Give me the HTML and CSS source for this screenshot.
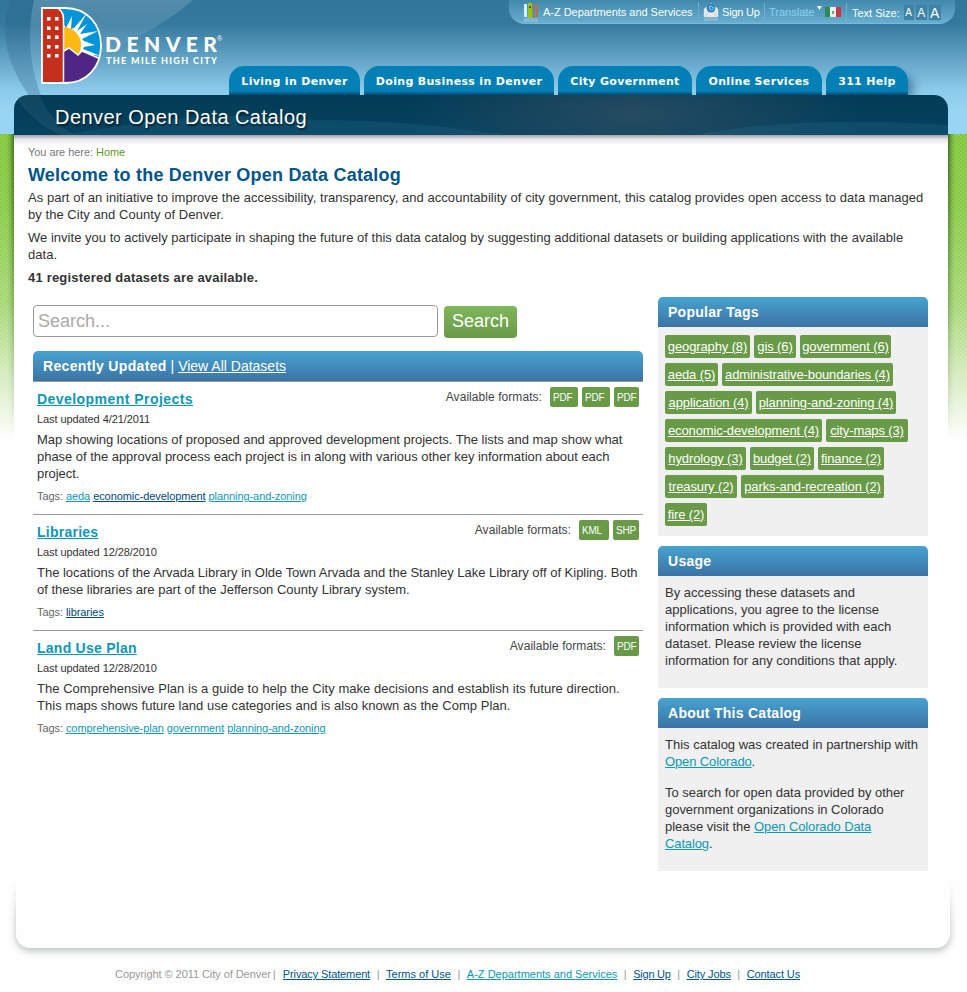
FILE: index.html
```html
<!DOCTYPE html>
<html lang="en">
<head>
<meta charset="utf-8">
<title>Denver Open Data Catalog</title>
<link rel="stylesheet" href="styles.css">
</head>
<body>
<svg class="backdrop" width="967" height="134" viewBox="0 0 967 134" aria-hidden="true">
  <defs>
    <linearGradient id="sweep" x1="0" y1="0" x2="0" y2="1"><stop offset="0" stop-color="#fff" stop-opacity=".16"/><stop offset="1" stop-color="#fff" stop-opacity="0"/></linearGradient>
    <linearGradient id="ring" x1="0" y1="0" x2="0" y2="1"><stop offset="0" stop-color="#0d3e63" stop-opacity=".1"/><stop offset="1" stop-color="#0d3e63" stop-opacity=".28"/></linearGradient>
  </defs>
  <path d="M34 0H193C165 24 128 48 34 75C28 42 30 20 34 0Z" fill="url(#sweep)"/>
  <path d="M10 0H34C25 38 30 78 52 120C25 98-8 48 10 0Z" fill="url(#ring)"/>
</svg>
<div class="page">
  <header class="masthead">
    <svg class="logo" width="184" height="80" viewBox="0 0 184 80" role="img" aria-label="Denver, The Mile High City">
      <defs><clipPath id="dee"><path d="M1 1H24C46 1 60 17 60 38.500S46 76 24 76H1Z"/></clipPath></defs>
      <g clip-path="url(#dee)">
        <path fill="#0095da" d="M20 0h42v54H20z"/>
        <path fill="#fff" d="M22 16L25 21L31 9L30 22L33 21L46 6L36 24L46 17L39 27L57 24L41 32L43 34L54 38L43 40L42 42L60 49L40 46L22 44Z"/>
        <circle cx="22" cy="38" r="18" fill="#fdb913"/>
        <path fill="#4f2683" stroke="#fff" stroke-width="1.500" d="M21 45L28 41L37 48L41 44L62 53V80H21Z"/>
        <path fill="#c4301c" stroke="#fff" stroke-width="1.500" d="M0 0H14Q22.500 3 22.500 12V80H0Z"/>
        <path fill="#fff" d="M6 10h3.500v3.500H6zM14 10h3.500v3.500H14zM6 19.500h3.500V23H6zM14 19.500h3.500V23H14zM6 28.500h3.500V32H6zM14 28.500h3.500V32H14zM6 38h3.500v3.500H6zM14 38h3.500v3.500H14zM6 47h3.500v3.500H6zM14 47h3.500v3.500H14z"/>
      </g>
      <path fill="none" stroke="#fff" stroke-width="1.800" d="M1 1H24C46 1 60 17 60 38.500S46 76 24 76H1Z"/>
      <text class="logo-name" x="64" y="45" textLength="112" lengthAdjust="spacing">DENVER</text>
      <text class="logo-reg" x="176" y="34">®</text>
      <text class="logo-sub" x="65" y="57" textLength="111" lengthAdjust="spacing">THE MILE HIGH CITY</text>
    </svg>
    <div class="topright">
      <div class="utility">
        <svg class="ico-books" width="17" height="20" viewBox="0 0 17 20"><path fill="#d7f0f8" d="M1 2h3v13H1z"/><path fill="#9cc20a" d="M5 1h4v15H5z"/><path fill="#a9744f" d="M10 2h2v14h-2zM13 2h2v13h-2z"/><path fill="#4b5b32" d="M6 4h2v2H6z"/><path fill="#fff" opacity=".2" d="M1 16h14v4H1z"/></svg>
        <a class="u-az">A-Z Departments and Services</a>
        <i class="bar"></i>
        <svg class="ico-mail" width="16" height="20" viewBox="0 0 16 20"><path fill="#e9edf0" stroke="#c2c8ce" stroke-width=".6" d="M1 7L8 1L15 7V15H1Z"/><circle cx="8" cy="6" r="4.500" fill="#2d83bd"/><path fill="none" stroke="#9bd3f0" d="M10 7.500Q7 9 6.500 6T9 4.500Q10 7 11.500 6"/><path fill="#e4e6e8" d="M1 7L8 12L15 7V15H1Z"/><path fill="none" stroke="#c2c8ce" stroke-width=".6" d="M1 15L6 10.500M15 15L10 10.500"/><path fill="#fff" opacity=".2" d="M1 16h14v3H1z"/></svg>
        <a class="u-sign">Sign Up</a>
        <i class="bar"></i>
        <a class="u-trans">Translate</a>
        <svg class="ico-flag" width="25" height="14" viewBox="0 0 25 14"><path fill="#fff" d="M0 1h5L2.500 5z"/><path fill="#2b8b56" d="M8 2h5v10H8z"/><path fill="#eee" d="M13 2h6v10h-6z"/><path fill="#c73844" d="M19 2h5v10h-5z"/><path fill="#8b9a77" d="M15 6h2v3h-2z"/></svg>
        <i class="bar"></i>
        <span class="u-size">Text Size:</span>
        <span class="sz s1">A</span><span class="sz s2">A</span><span class="sz s3">A</span>
      </div>
    </div>
    <nav class="tabs">
      <a class="t1">Living in Denver</a><a class="t2">Doing Business in Denver</a><a class="t3">City Government</a><a class="t4">Online Services</a><a class="t5">311 Help</a>
    </nav>
  </header>
  <div class="sheet">
    <div class="titlebar">
      <svg class="waves" width="934" height="40" viewBox="0 0 934 40" aria-hidden="true"><path fill="#fff" opacity=".06" d="M0 0H26Q34 24 60 40H45Q15 24 0 0Z"/><path fill="#3a87ad" opacity=".17" d="M50 40Q200 12 300 25Q400 25 490 40ZM680 40Q790 20 934 30V40Z"/></svg>
      <span>Denver Open Data Catalog</span>
    </div>
    <div class="content">
      <div class="crumbs">You are here: <a>Home</a></div>
      <h1>Welcome to the Denver Open Data Catalog</h1>
      <p class="intro i1">As part of an initiative to improve the accessibility, transparency, and accountability of city government, this catalog provides open access to data managed<br>by the City and County of Denver.</p>
      <p class="intro i2">We invite you to actively participate in shaping the future of this data catalog by suggesting additional datasets or building applications with the available<br>data.</p>
      <p class="intro count">41 registered datasets are available.</p>
      <div class="columns">
        <main>
          <div class="search"><div class="field">Search...</div><div class="go">Search</div></div>
          <div class="panel-head wide"><b>Recently Updated</b>&nbsp;|&nbsp;<a>View All Datasets</a></div>
          <article>
            <div class="top"><h2 class="h-dev">Development Projects</h2><div class="formats"><span>Available formats:</span><b class="pad">PDF</b><b class="pad">PDF</b><b>PDF</b></div></div>
            <div class="updated">Last updated 4/21/2011</div>
            <p class="d1">Map showing locations of proposed and approved development projects. The lists and map show what<br>phase of the approval process each project is in along with various other key information about each<br>project.</p>
            <div class="tagline">Tags: <a>aeda</a> <a class="seen">economic-development</a> <a>planning-and-zoning</a></div>
          </article>
          <article>
            <div class="top"><h2>Libraries</h2><div class="formats"><span>Available formats:</span><b class="kml">KML</b><b class="shp">SHP</b></div></div>
            <div class="updated">Last updated 12/28/2010</div>
            <p class="d2">The locations of the Arvada Library in Olde Town Arvada and the Stanley Lake Library off of Kipling. Both<br>of these libraries are part of the Jefferson County Library system.</p>
            <div class="tagline">Tags: <a class="seen">libraries</a></div>
          </article>
          <article>
            <div class="top"><h2>Land Use Plan</h2><div class="formats"><span>Available formats:</span><b>PDF</b></div></div>
            <div class="updated">Last updated 12/28/2010</div>
            <p class="d3">The Comprehensive Plan is a guide to help the City make decisions and establish its future direction.<br>This maps shows future land use categories and is also known as the Comp Plan.</p>
            <div class="tagline">Tags: <a>comprehensive-plan</a> <a>government</a> <a>planning-and-zoning</a></div>
          </article>
        </main>
        <aside>
          <section>
            <div class="panel-head"><b>Popular Tags</b></div>
            <div class="cloud">
              <div><a class="geo">geography (8)</a><a class="gis">gis (6)</a><a class="gov">government (6)</a></div>
              <div><a class="aeda">aeda (5)</a><a class="adm">administrative-boundaries (4)</a></div>
              <div><a class="app">application (4)</a><a class="zon">planning-and-zoning (4)</a></div>
              <div><a class="eco">economic-development (4)</a><a class="map">city-maps (3)</a></div>
              <div><a class="hyd">hydrology (3)</a><a class="bud">budget (2)</a><a class="fin">finance (2)</a></div>
              <div><a class="tre">treasury (2)</a><a class="rec">parks-and-recreation (2)</a></div>
              <div><a class="fire">fire (2)</a></div>
            </div>
          </section>
          <section>
            <div class="panel-head"><b>Usage</b></div>
            <div class="body"><p>By accessing these datasets and<br>applications, you agree to the license<br>information which is provided with each<br>dataset. Please review the license<br>information for any conditions that apply.</p></div>
          </section>
          <section>
            <div class="panel-head"><b>About This Catalog</b></div>
            <div class="body"><p>This catalog was created in partnership with<br><a>Open Colorado</a>.</p><p class="more">To search for open data provided by other<br>government organizations in Colorado<br>please visit the <a>Open Colorado Data<br>Catalog</a>.</p></div>
          </section>
        </aside>
      </div>
    </div>
  </div>
  <div class="base"></div>
  <footer><span class="copy">Copyright © 2011 City of Denver</span><i class="first">|</i><a>Privacy Statement</a><i>|</i><a class="even">Terms of Use</a><i>|</i><a class="even new">A-Z Departments and Services</a><i>|</i><a class="tight">Sign Up</a><i>|</i><a>City Jobs</a><i>|</i><a>Contact Us</a></footer>
</div>
</body>
</html>
```
FILE: styles.css
```css
* { box-sizing: border-box; }
body {
  margin: 0;
  height: 992px;
  overflow: hidden;
  font: 13px/17px "Liberation Sans", Arial, sans-serif;
  color: #333;
  white-space: nowrap;
  background:
    linear-gradient(#33769b 0, #35799e 24px, #8bcaea 90px, #98d5f5 112px, #98d5f5 134px) 0 0 / 100% 134px no-repeat,
    linear-gradient(rgba(255,255,255,0) 0, rgba(255,255,255,.06) 70px, rgba(255,255,255,.3) 170px, #fefefe 305px) 0 134px / 100% 306px no-repeat,
    conic-gradient(#8ecf4d 25%, #82c63e 0 50%, #8ecf4d 0 75%, #82c63e 0) 0 134px / 4px 4px;
}
.backdrop { position: absolute; left: 0; top: 0; }
.page { position: relative; height: 992px; background: linear-gradient(#fefefe, #fefefe) 0 440px / 100% 552px no-repeat; }
h1, h2, p { margin: 0; }

.masthead { height: 95px; position: relative; display: flex; flex-direction: column; justify-content: space-between; }
.logo { position: absolute; left: 41px; top: 7px; }
.logo-name { font: 900 21px Lato, sans-serif; fill: #fff; }
.logo-reg { font: 7px "Liberation Sans", sans-serif; fill: #fff; }
.logo-sub { font: 900 9px Lato, sans-serif; fill: #fff; }
.topright { display: flex; justify-content: flex-end; padding-right: 12px; }
.utility {
  width: 446px; height: 24px; padding-left: 14px;
  display: flex; align-items: center;
  font-size: 11px; color: #fff;
  background: linear-gradient(#4088ac, #68aed0);
  border-bottom: 1px solid #79bad8;
  border-radius: 0 0 16px 16px;
}
.utility svg { flex: none; }
.u-az { width: 151px; margin-left: 3px; letter-spacing: -.03px; padding-top: 1px; }
.bar { width: 1px; height: 18px; background: #6fb0cf; margin: 0 4px; }
.u-sign { margin-left: 3px; width: 38px; letter-spacing: -.2px; padding-top: 1px; }
.u-trans { color: #8fd0ee; width: 45px; padding-top: 1px; }
.ico-flag { margin-left: 3px; }
.u-size { padding-top: 3px; margin: 0 4px 0 1px; }
.sz { background: #3e83a6; height: 15px; line-height: 16px; width: 10px; margin: 2px 2px 0 0; text-align: center; }
.s1 { font-size: 10px; }
.s2 { font-size: 12px; width: 11px; }
.s3 { font-size: 14px; width: 12px; }

.tabs { display: flex; gap: 4px; padding-left: 229px; }
.tabs a {
  height: 29px; line-height: 31px; text-align: center; letter-spacing: .32px;
  font-family: "DejaVu Sans", Verdana, sans-serif; font-weight: bold; font-size: 11px; color: #fff;
  border-radius: 15px 15px 0 0;
  background: linear-gradient(#0480b6 0, #0480b6 25px, #044a6b 29px);
}
.t1 { width: 131px; } .t2 { width: 190px; } .t3 { width: 134px; } .t4 { width: 126px; }
.tabs .t5 { width: 82px; box-shadow: 8px 6px 10px -3px rgba(0,40,70,.45); }

.sheet { width: 934px; height: 785px; margin-left: 14px; position: relative; }
.sheet::before {
  content: ""; position: absolute; left: -7px; right: -7px; top: 39px; height: 305px;
  background:
    linear-gradient(to left, rgba(10,40,10,.55), rgba(10,40,10,.15) 4px, transparent) 0 0 / 7px 100% no-repeat,
    linear-gradient(to right, rgba(10,40,10,.55), rgba(10,40,10,.15) 4px, transparent) 100% 0 / 7px 100% no-repeat;
  -webkit-mask: linear-gradient(#000, transparent);
  mask: linear-gradient(#000, transparent);
}
.titlebar {
  position: relative; height: 40px; padding-left: 41px;
  font-size: 20px; line-height: 44px; color: #fff;
  text-shadow: 1px 2px 2px rgba(0,0,0,.6);
  border-radius: 14px 14px 0 0;
  background: radial-gradient(ellipse 230px 70px at 620px 20px, #254b61, rgba(37,75,97,0)), linear-gradient(#033b55, #04425f);
  overflow: hidden;
}
.titlebar span { position: relative; letter-spacing: .45px; }
.waves { position: absolute; left: 0; top: 0; }
.content {
  position: relative; height: 745px; padding: 9px 14px 0;
  background: linear-gradient(rgba(70,70,80,.5), rgba(120,120,130,.2) 4px, rgba(255,255,255,0) 10px) no-repeat, #fff;
}
.crumbs { font-size: 11px; line-height: 16px; color: #777; letter-spacing: -.05px; }
.crumbs a { color: #5b9a1f; }
h1 { font-size: 18px; line-height: 22px; margin: 4px 0 3px; color: #00558c; letter-spacing: .21px; }
.intro { margin-bottom: 6px; }
.i1 { letter-spacing: .045px; }
.i2 { letter-spacing: .02px; }
.count { font-weight: bold; letter-spacing: .2px; }
.columns { display: flex; padding: 5px 6px 0 5px; gap: 15px; }
main { width: 610px; }
.search { display: flex; gap: 6px; padding-top: 8px; height: 54px; }
.field { width: 405px; height: 32px; border: 1px solid #999; border-radius: 4px; padding-left: 4px; font-size: 18px; line-height: 30px; color: #a9a9a9; }
.go { width: 73px; height: 32px; margin-top: 1px; border-radius: 4px; background: linear-gradient(#80b65c, #689a47); color: #fff; font-size: 18px; line-height: 30px; text-align: center; }
.panel-head { height: 30px; line-height: 30px; padding-left: 10px; font-size: 14px; color: #fff; background: linear-gradient(#46a3d0, #3c73a5); border-radius: 5px 5px 0 0; }
.panel-head b { letter-spacing: .27px; }
.wide b { letter-spacing: .34px; }
.wide { height: 31px; border-bottom: 1px solid #999; }
.panel-head a, article a, .cloud a, .body a, footer a { text-decoration: underline; }

article { padding: 5px 4px 10px; border-bottom: 1px solid #999; }
article:last-child { border: 0; }
.top { height: 24px; display: flex; justify-content: space-between; }
h2 { font-size: 14px; line-height: 24px; color: #0d97b8; text-decoration: underline; letter-spacing: .25px; }
.h-dev { letter-spacing: .45px; }
.formats { display: flex; gap: 4px; height: 20px; font-size: 12px; line-height: 20px; }
.formats span { margin-right: 4px; color: #444; letter-spacing: .06px; }
.formats b { font-weight: normal; font-size: 10px; color: #fff; background: #689a47; border-radius: 2px; width: 25px; height: 20px; padding-left: 3px; line-height: 21px; letter-spacing: -.2px; }
.formats .pad { width: 28px; }
.formats .kml { width: 30px; }
.formats .shp { width: 26px; }
.updated { font-size: 11px; line-height: 16px; margin-bottom: 4px; letter-spacing: -.08px; }
.d1 { letter-spacing: -.035px; }
.d2 { letter-spacing: -.01px; }
.d3 { letter-spacing: .03px; }
.tagline { font-size: 11px; line-height: 16px; margin-top: 6px; color: #666; letter-spacing: -.07px; }
article a, .body a { color: #0d97b8; }
.body a { letter-spacing: -.12px; }
.more { letter-spacing: -.03px; }
article a.seen { color: #00477f; }

aside { width: 270px; }
aside section { margin-bottom: 10px; }
.cloud { background: #f0f0f0; padding: 8px 7px 10px; display: flex; flex-direction: column; gap: 5px; letter-spacing: -.12px; }
.cloud div { display: flex; gap: 4px; }
.cloud a { height: 23px; line-height: 24px; text-align: center; color: #fff; background: #689a47; border-radius: 2px; }
.geo { width: 85px; } .gis { width: 42px; } .gov { width: 91px; }
.aeda { width: 53px; } .adm { width: 171px; }
.app { width: 87px; } .zon { width: 140px; }
.eco { width: 157px; } .map { width: 82px; }
.hyd { width: 81px; } .bud { width: 64px; } .fin { width: 66px; }
.tre { width: 72px; } .rec { width: 143px; }
.fire { width: 42px; }
.body { background: #f0f0f0; padding: 8px 7px 19px; }
.body p + p { margin-top: 14px; }

.base {
  width: 934px; height: 68px; margin-left: 16px;
  border-radius: 0 0 14px 14px; background: #fefefe;
  box-shadow: 0 3px 7px rgba(60,80,80,.35);
  clip-path: inset(0 -16px -16px -16px);
  -webkit-mask: linear-gradient(transparent, #000 40px) no-clip;
  mask: linear-gradient(transparent, #000 40px) 0 0 / 100% 200% no-clip;
}
footer { display: flex; padding: 18px 0 0 115px; font-size: 11px; line-height: 16px; color: #999; }
.copy { letter-spacing: -.06px; }
footer a { color: #00558c; letter-spacing: -.12px; }
footer a.even { letter-spacing: 0; }
footer a.tight { letter-spacing: -.25px; }
footer a.new { color: #0d97b8; }
footer i { font-style: normal; width: 16px; text-align: center; }
footer .first { width: 12px; text-align: left; padding-left: 2px; }
```
